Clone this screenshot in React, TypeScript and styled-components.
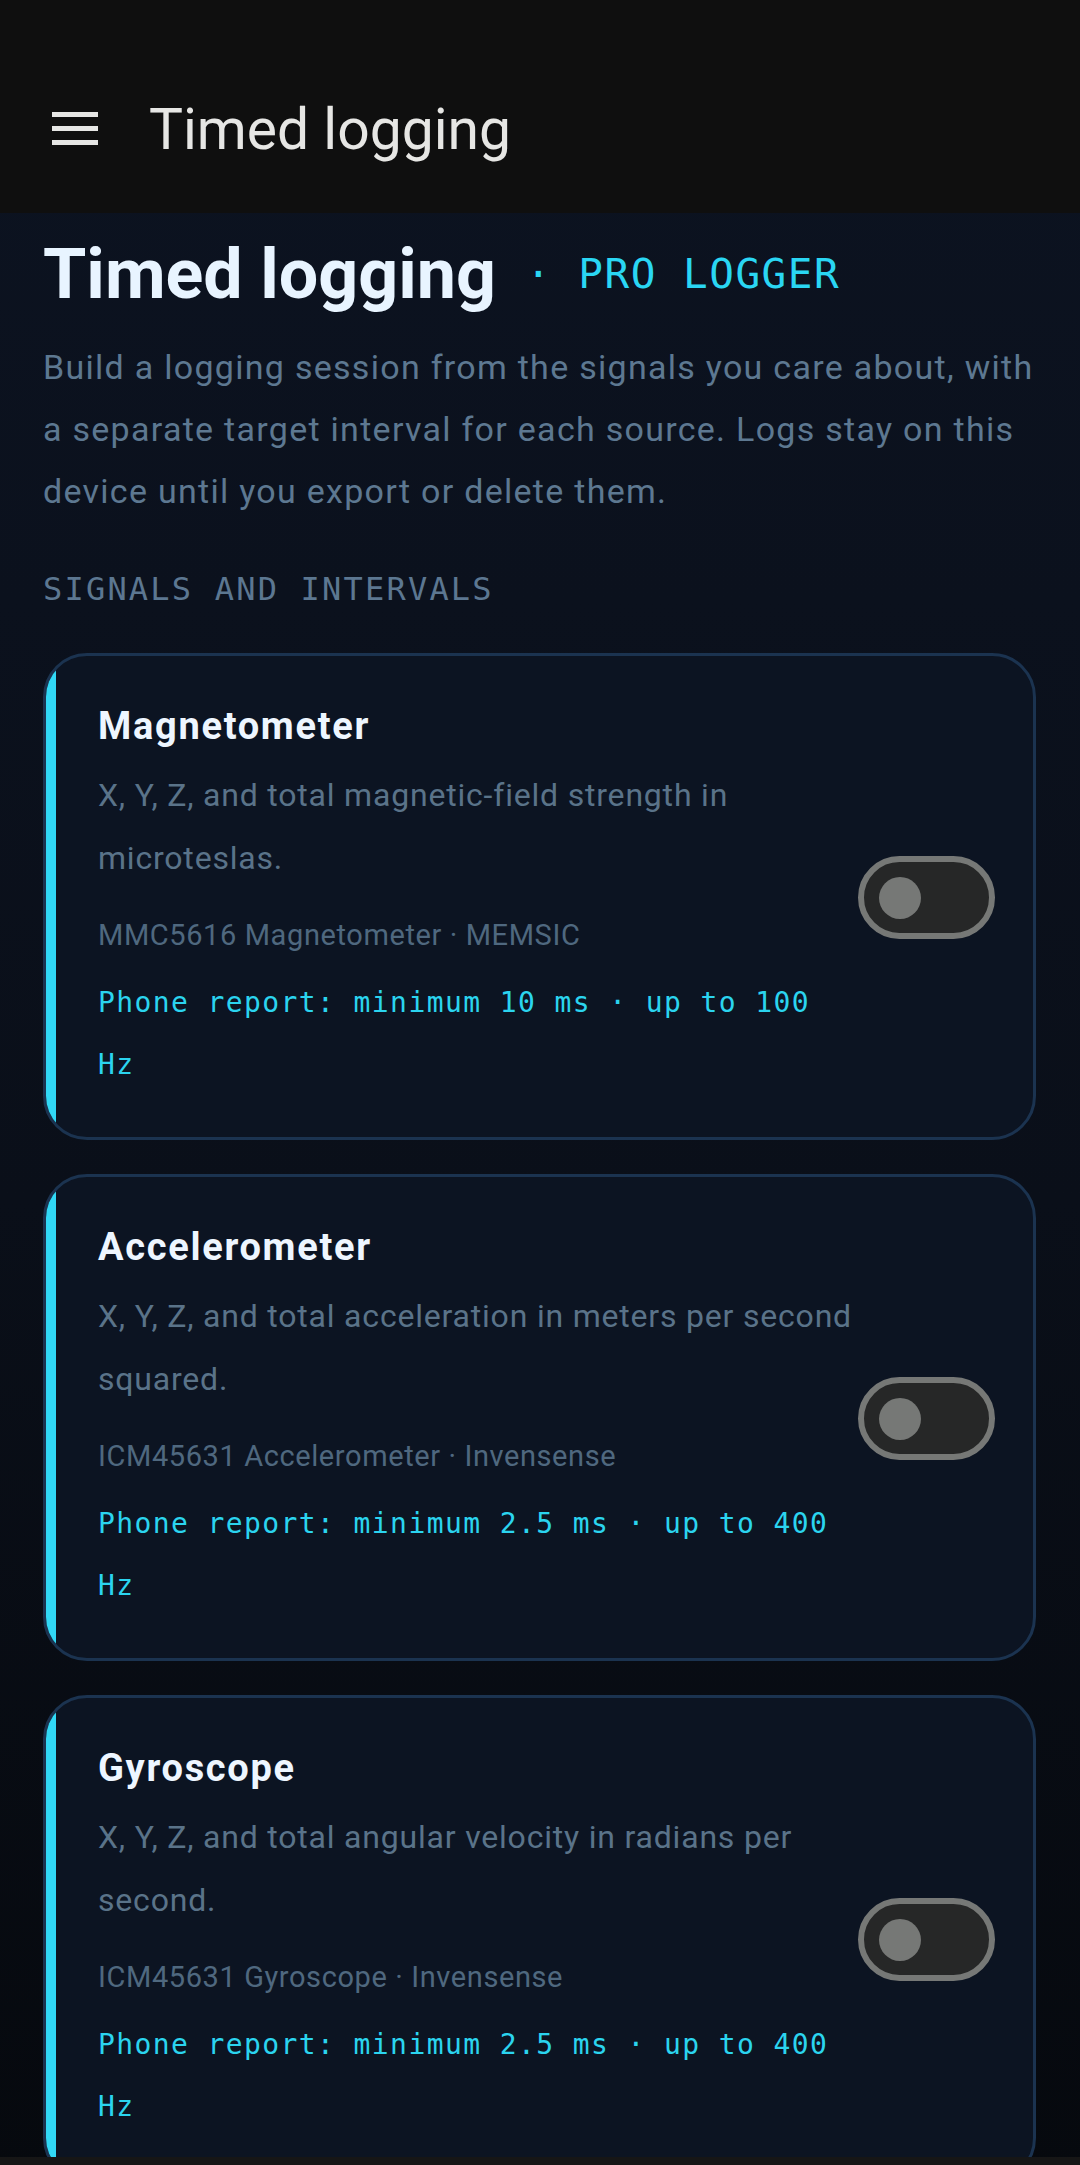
import React from 'react';
import styled, { createGlobalStyle } from 'styled-components';

type Signal = {
  name: string;
  description: string;
  hardware: string;
  report: string;
};

const signals: Signal[] = [
  {
    name: 'Magnetometer',
    description: 'X, Y, Z, and total magnetic-field strength in microteslas.',
    hardware: 'MMC5616 Magnetometer · MEMSIC',
    report: 'Phone report: minimum 10 ms · up to 100 Hz',
  },
  {
    name: 'Accelerometer',
    description: 'X, Y, Z, and total acceleration in meters per second squared.',
    hardware: 'ICM45631 Accelerometer · Invensense',
    report: 'Phone report: minimum 2.5 ms · up to 400 Hz',
  },
  {
    name: 'Gyroscope',
    description: 'X, Y, Z, and total angular velocity in radians per second.',
    hardware: 'ICM45631 Gyroscope · Invensense',
    report: 'Phone report: minimum 2.5 ms · up to 400 Hz',
  },
];

const sans = `Roboto, "Noto Sans", "Liberation Sans", sans-serif`;
const mono = `"DejaVu Sans Mono", "Liberation Mono", monospace`;

const GlobalStyle = createGlobalStyle`
  html, body {
    margin: 0;
    padding: 0;
    background: #0b111d;
  }
  body {
    font-family: ${sans};
  }
`;

const Screen = styled.div`
  min-height: 2165px;
  display: flex;
  flex-direction: column;
  background: linear-gradient(180deg, #0c1321 0%, #0a0f19 55%, #06090e 100%);
`;

const AppBar = styled.header`
  height: 213px;
  box-sizing: border-box;
  padding: 45px 0 0 52px;
  display: flex;
  align-items: center;
  gap: 51px;
  background: #0f0f0f;
`;

const BarTitle = styled.h1`
  margin: 0;
  font-family: ${sans};
  font-weight: 400;
  font-size: 57px;
  color: #e6e6e4;
`;

const Content = styled.main`
  padding: 21px 44px 0 43px;
  display: flex;
  flex-direction: column;
`;

const HeadingRow = styled.div`
  display: flex;
  align-items: center;
  gap: 30px;
`;

const Heading = styled.h2`
  margin: 0;
  font-family: ${sans};
  font-weight: 700;
  font-size: 70px;
  line-height: 80px;
  color: #e8f4ff;
`;

const Badge = styled.span`
  font-family: ${mono};
  font-size: 41px;
  line-height: 48px;
  letter-spacing: 1.5px;
  color: #2ad6f3;
  white-space: pre;
`;

const Intro = styled.p`
  margin: 22px 0 0;
  font-size: 34px;
  line-height: 62px;
  letter-spacing: 1.28px;
  color: #5d7891;
`;

const SectionLabel = styled.div`
  margin-top: 47px;
  font-family: ${mono};
  font-size: 32px;
  line-height: 40px;
  letter-spacing: 2.2px;
  color: #5c7791;
`;

const CardList = styled.div`
  margin-top: 44px;
  display: flex;
  flex-direction: column;
  gap: 34px;
`;

const Card = styled.section`
  display: flex;
  border: 3px solid #1b3350;
  border-radius: 44px;
  overflow: hidden;
  background: #0c1422;
`;

const Strip = styled.div`
  width: 10px;
  flex-shrink: 0;
  background: #31d8f6;
`;

const CardBody = styled.div`
  flex: 1;
  display: flex;
  align-items: center;
  padding: 47px 38px 41px 42px;
`;

const Info = styled.div`
  flex: 1;
  min-width: 0;
`;

const Name = styled.h3`
  margin: 0;
  font-size: 38px;
  line-height: 46px;
  font-weight: 700;
  letter-spacing: 1.7px;
  color: #eef6ff;
`;

const Description = styled.p`
  margin: 15px 0 0;
  font-size: 32px;
  line-height: 63px;
  letter-spacing: 0.8px;
  color: #5a7389;
`;

const Hardware = styled.div`
  margin-top: 25px;
  font-size: 29px;
  line-height: 40px;
  letter-spacing: 0.6px;
  color: #4f687f;
`;

const Report = styled.div`
  margin-top: 17px;
  font-family: ${mono};
  font-size: 28px;
  line-height: 62px;
  letter-spacing: 1.4px;
  color: #2bd4ef;
`;

const Switch = styled.div<{ $on?: boolean }>`
  width: 137px;
  height: 83px;
  box-sizing: border-box;
  flex-shrink: 0;
  margin-top: -4px;
  border: 6px solid #767876;
  border-radius: 42px;
  background: #262727;
  display: flex;
  align-items: center;
  justify-content: ${p => (p.$on ? 'flex-end' : 'flex-start')};
  padding: 0 15px;
`;

const Thumb = styled.div`
  width: 42px;
  height: 42px;
  border-radius: 50%;
  background: #767876;
`;

const NavBar = styled.div`
  position: fixed;
  left: 0;
  right: 0;
  bottom: 0;
  height: 8px;
  background: #161616;
`;

const MenuIcon = () => (
  <svg width="46" height="34" viewBox="0 0 46 34" aria-hidden>
    <rect x="0" y="0" width="46" height="5" fill="#e6e6e4" />
    <rect x="0" y="14" width="46" height="5" fill="#e6e6e4" />
    <rect x="0" y="28" width="46" height="5" fill="#e6e6e4" />
  </svg>
);

const SignalCard = ({ signal }: { signal: Signal }) => (
  <Card>
    <Strip />
    <CardBody>
      <Info>
        <Name>{signal.name}</Name>
        <Description>{signal.description}</Description>
        <Hardware>{signal.hardware}</Hardware>
        <Report>{signal.report}</Report>
      </Info>
      <Switch>
        <Thumb />
      </Switch>
    </CardBody>
  </Card>
);

export default function App() {
  return (
    <Screen>
      <GlobalStyle />
      <AppBar>
        <MenuIcon />
        <BarTitle>Timed logging</BarTitle>
      </AppBar>
      <Content>
        <HeadingRow>
          <Heading>Timed logging</Heading>
          <Badge>· PRO LOGGER</Badge>
        </HeadingRow>
        <Intro>
          Build a logging session from the signals you care about, with a separate target
          interval for each source. Logs stay on this device until you export or delete them.
        </Intro>
        <SectionLabel>SIGNALS AND INTERVALS</SectionLabel>
        <CardList>
          {signals.map(s => (
            <SignalCard key={s.name} signal={s} />
          ))}
        </CardList>
      </Content>
      <NavBar />
    </Screen>
  );
}
